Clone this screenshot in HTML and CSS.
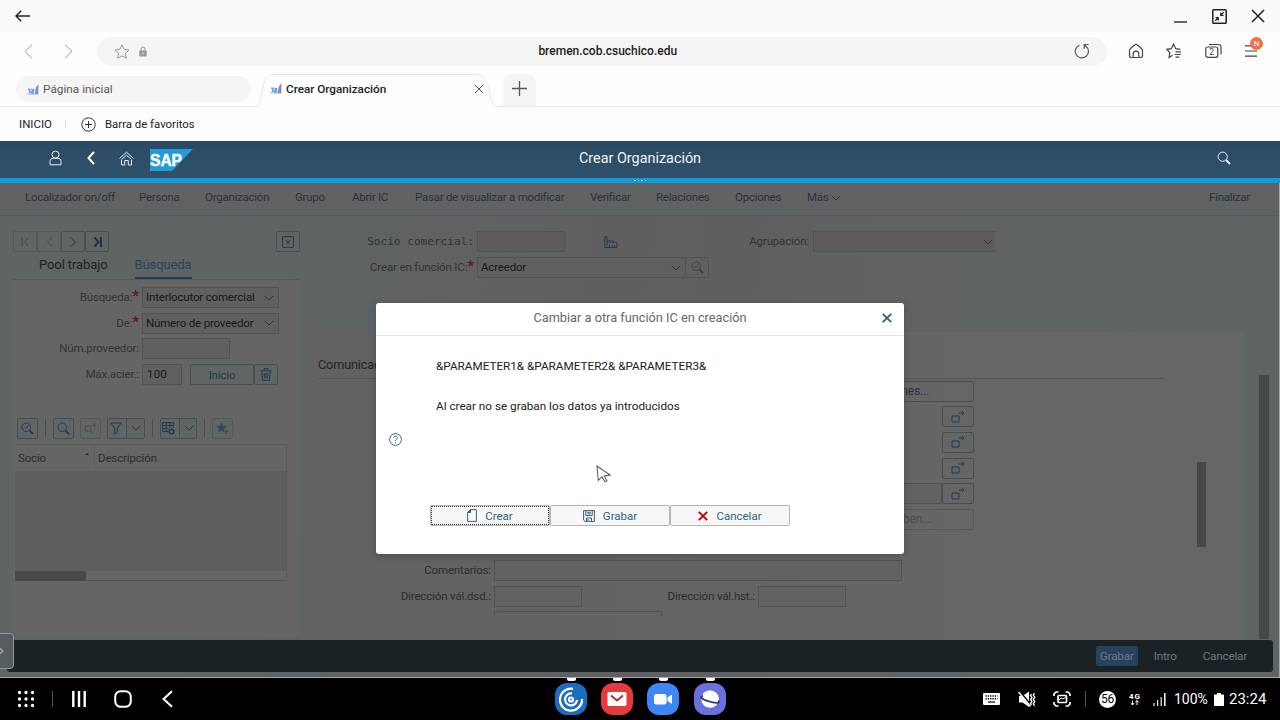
FILE: index.html
```html
<!DOCTYPE html>
<html lang="es">
<head>
<meta charset="utf-8">
<title>Crear Organización</title>
<link rel="stylesheet" href="styles.css">
</head>
<body>
<svg class="defs" width="0" height="0">
  <defs>
    <symbol id="chev" viewBox="0 0 10 6"><path d="M.7.8 5 5.1 9.3.8"/></symbol>
    <symbol id="lens" viewBox="0 0 14 14"><circle cx="5.7" cy="5.7" r="4.600"/><path d="m9 9 4 4" stroke-width="1.8"/></symbol>
    <symbol id="lens-check" viewBox="0 0 14 14"><circle cx="5.7" cy="5.7" r="4.6"/><path d="M3.7 5.6 5.2 7.1 8 4"/><path d="m9 9 4 4" stroke-width="1.8"/></symbol>
    <symbol id="open" viewBox="0 0 14 14"><path d="M1 6h7v6H1zM8 3h5M10.8.8 13 3l-2.2 2.2"/></symbol>
    <symbol id="fav" viewBox="0 0 12 11"><g stroke="none"><path d="M0 10.5 .5 9l7-2 3-6.500h1V11z" fill="#b9c8e6"/><path d="M1 4.500 7 5v4.500L2.500 9z" fill="#5b93d8"/><path d="M8.800 4 11.300.5 11 10H8z" fill="#8f86bd"/></g><path d="M2.500 6h3M4 6v2.500M6 8h2" stroke="#e8f0fb" stroke-width=".8"/></symbol>
  </defs>
</svg>

<header class="titlebar">
  <svg class="win-back" width="16" height="12" viewBox="0 0 16 12"><path d="M15 6H1M6.200.8 1 6l5.200 5.200"/></svg>
  <svg class="win-min" width="13" height="2"><rect width="13" height="2"/></svg>
  <svg class="win-restore" width="15" height="15" viewBox="0 0 15 15"><rect x=".8" y=".8" width="13.400" height="13.400" rx=".8"/><path d="M11.800 3.200 9 6M8.700 3.500v2.800h2.800M3.200 11.800 6 9M3.500 8.700h2.800v2.800" stroke-width="1.200"/></svg>
  <svg class="win-close" width="14" height="14" viewBox="0 0 14 14"><path d="m1 1 12 12M13 1 1 13"/></svg>
</header>

<div class="addressbar">
  <svg class="nav-prev" width="9" height="15" viewBox="0 0 9 15"><path d="M8 .7 1 7.500l7 6.800"/></svg>
  <svg class="nav-next" width="9" height="15" viewBox="0 0 9 15"><path d="m1 .7 7 6.800-7 6.800"/></svg>
  <div class="url">
    <svg class="star" width="16" height="15" viewBox="0 0 16 15"><path d="m8 1 2.100 4.300 4.900.7-3.500 3.400.8 4.800L8 11.900l-4.300 2.300.8-4.800L1 6l4.900-.7z"/></svg>
    <svg class="lock" width="8" height="11" viewBox="0 0 8 11"><path d="M2 5V3a2 2 0 0 1 4 0v2" fill="none" stroke="#999"/><rect x=".3" y="4.500" width="7.400" height="6" rx=".8" fill="#999"/><path d="M4 6.500v2" stroke="#ddd"/></svg>
    <span class="host">bremen.cob.csuchico.edu</span>
    <svg class="reload" width="16" height="16" viewBox="0 0 16 16"><path d="M5.500 2.200A6.600 6.600 0 1 0 12 3.200M14.500 1.500h-4.300v4.200M10.300 1.700l2 2.200"/></svg>
  </div>
  <div class="tools">
    <svg width="16" height="16" viewBox="0 0 16 16"><path d="M1.500 7.200c0-.6.300-1 .8-1.400l4.700-4c.6-.5 1.400-.5 2 0l4.700 4c.5.400.8.800.8 1.400v5.600c0 1-.7 1.700-1.700 1.700H10.800V11a2.800 2.800 0 0 0-5.600 0v3.500H3.200c-1 0-1.700-.7-1.700-1.700zM5.200 14.500h5.600"/></svg>
    <svg width="16" height="16" viewBox="0 0 16 16"><path d="M6.600 12.300 3 14.500l.9-4.700L.8 6.300l4.500-.6 2.200-4.500 2.200 4.500 4.600.6M9.500 8.800h5.500M8.500 11.500h6.200M9.500 14.200h3.800"/></svg>
    <svg width="17" height="16" viewBox="0 0 17 16"><rect x=".8" y="4" width="12" height="10.300" rx="2"/><path d="M4 1.500h9.500c1.500 0 2.500 1 2.500 2.500v7.500"/><text x="4.300" y="12">2</text></svg>
    <div class="menu-btn">
      <svg width="14" height="14" viewBox="0 0 14 14"><path d="M1 1.800h12M1 7h12M1 12.200h12"/></svg>
      <span class="badge">N</span>
    </div>
  </div>
</div>

<div class="tabs">
  <div class="tab-idle"><svg width="12" height="11"><use href="#fav"/></svg><span>Página inicial</span></div>
  <div class="tab-live">
    <svg class="tab-shape" width="242" height="35" viewBox="0 0 242 35"><path d="M0 34.500h1C7 34.500 4 2.500 16 2.500H220C237 2.500 232 34.500 240 34.500h2"/></svg>
    <svg class="favicon" width="12" height="11"><use href="#fav"/></svg><span>Crear Organización</span>
    <svg class="tab-close" width="10" height="10" viewBox="0 0 10 10"><path d="m.8.8 8.400 8.400M9.200.8.800 9.200"/></svg>
  </div>
  <div class="tab-new"><svg width="15" height="15" viewBox="0 0 15 15"><path d="M7.500 0v15M0 7.500h15"/></svg></div>
</div>

<div class="bookmarks">
  <span class="bm-home">INICIO</span><i></i>
  <svg width="15" height="15" viewBox="0 0 15 15"><circle cx="7.500" cy="7.500" r="6.700"/><path d="M7.500 4v7M4 7.500h7"/></svg>
  <span class="bm-text">Barra de favoritos</span>
</div>

<header class="shell">
  <svg class="user" width="13" height="16" viewBox="0 0 13 16"><circle cx="6.500" cy="4.600" r="3.500"/><path d="M1 14.800V11.500c0-2 1.300-3.200 3.200-3.200h4.600c1.900 0 3.200 1.200 3.200 3.200v3.300z"/></svg>
  <svg class="back" width="8" height="14" viewBox="0 0 8 14"><path d="M7 1 1.500 7 7 13"/></svg>
  <svg class="home" width="15" height="15" viewBox="0 0 15 15"><path d="M.5 7.500 7.500 1.200l7 6.300M2.500 9v5h3.200V9.500h3.600V14h3.200V9M2.500 8.500l5-4.300 5 4.300"/></svg>
  <svg class="sap" width="43" height="22" viewBox="0 0 43 22"><path d="M0 0h43L22 22H0z" fill="#1e9cdb"/><text x="0" y="17.300" textLength="32" lengthAdjust="spacingAndGlyphs">SAP</text></svg>
  <h1>Crear Organización</h1>
  <svg class="find" width="14" height="14"><use href="#lens"/></svg>
</header>
<div class="loadbar"><i></i><i></i><i></i><i></i></div>

<main class="app">
  <nav class="menu">
    <span>Localizador on/off</span><span>Persona</span><span>Organización</span><span>Grupo</span><span>Abrir IC</span><span>Pasar de visualizar a modificar</span><span>Verificar</span><span>Relaciones</span><span>Opciones</span><span>Más <svg class="chev" width="10" height="6"><use href="#chev"/></svg></span><span>Finalizar</span>
  </nav>

  <div class="work">
    <aside class="side">
      <div class="pager">
        <b class="btn off"><svg width="9" height="12" viewBox="0 0 9 12"><path d="M1 1v10M7.500 1.500 3.500 6l4 4.500"/></svg></b><b class="btn off"><svg width="7" height="12" viewBox="0 0 7 12"><path d="M6 1.500 1.500 6 6 10.500"/></svg></b><b class="btn"><svg width="7" height="12" viewBox="0 0 7 12"><path d="M1 1.500 5.500 6 1 10.500"/></svg></b><b class="btn strong"><svg width="9" height="12" viewBox="0 0 9 12"><path d="M8 1v10M1.500 1.500l4 4.500-4 4.500"/></svg></b>
        <b class="btn shut"><svg width="12" height="12" viewBox="0 0 12 12"><path d="M.6.6h10.800v10.800H.6zM4 4l4 4M8 4 4 8"/></svg></b>
      </div>
      <div class="side-tabs"><span>Pool trabajo</span><span class="on">Búsqueda</span></div>
      <section class="side-panel">
        <div class="row"><label>Búsqueda:<em>*</em></label><div class="select">Interlocutor comercial<svg class="chev" width="10" height="6"><use href="#chev"/></svg></div></div>
        <div class="row"><label>De:<em>*</em></label><div class="select">Número de proveedor<svg class="chev" width="10" height="6"><use href="#chev"/></svg></div></div>
        <div class="row"><label>Núm.proveedor:</label><div class="field w88"></div></div>
        <div class="row"><label>Máx.acier.:</label><div class="field w40">100</div><b class="btn start">Inicio</b><b class="btn"><svg width="12" height="13" viewBox="0 0 12 13"><path d="M.5 2.800h11M4 2.500V.6h4v1.900M1.800 3l.7 9.400h7L10.200 3M4.300 5v5.500M6 5v5.500M7.700 5v5.500"/></svg></b></div>

        <div class="toolbar">
          <b class="btn sq"><svg width="13" height="13"><use href="#lens-check"/></svg></b><i></i>
          <b class="btn sq"><svg width="13" height="13"><use href="#lens"/></svg></b>
          <b class="btn sq off"><svg width="13" height="13" viewBox="0 0 14 14"><circle cx="4.500" cy="7" r="3.200"/><path d="m7 9.500 3.200 3.200M11 1v5M8.500 3.500h5"/></svg></b>
          <b class="btn split"><svg width="12" height="13" viewBox="0 0 12 13"><path d="M.8 1h10.400L7.300 6v4.500L4.700 12V6z"/></svg><u></u><svg width="10" height="6"><use href="#chev"/></svg></b><i></i>
          <b class="btn split"><svg width="13" height="13" viewBox="0 0 13 13"><path d="M6.500 9.500H.6V.6h10.800v5M.6 3.500h10.800M.6 6.500h6M4.200.6v8.900M7.800.6V6"/><circle cx="9.500" cy="9.500" r="2.300" stroke-width="1.500"/></svg><u></u><svg width="10" height="6"><use href="#chev"/></svg></b><i></i>
          <b class="btn sq off"><svg width="13" height="13" viewBox="0 0 13 13"><path d="m5.500.8 1.300 3.400 3.700.2-2.900 2.300-.2.300v2.300L5.500 8.200 2.700 10l.8-3.400L.7 4.400l3.600-.2z" fill="#384650"/><path d="M10 7v5.500M7.300 9.700h5.500"/></svg></b>
        </div>

        <div class="table">
          <div class="thead"><span>Socio<s></s></span><span>Descripción</span></div>
          <div class="tbody"></div>
          <div class="hscroll"><div></div></div>
        </div>
      </section>
    </aside>

    <section class="detail">
      <div class="top-row">
        <label class="mono">Socio comercial:</label><div class="field w88"></div>
        <svg class="factory" width="14" height="12" viewBox="0 0 14 12"><path d="M.8 11.400V.8h2.200v9M3 6.500 6 4v3l3.200-2.500v2.800l1.500-1.500c1.500 0 2.300 1 2.300 2.200v3.400H.8M5.500 9v2.400M8 9v2.400M10.500 9v2.400"/></svg>
        <label class="group-label">Agrupación:</label><div class="select group"><svg class="chev" width="10" height="6"><use href="#chev"/></svg></div>
      </div>
      <div class="top-row">
        <label>Crear en función IC:<em>*</em></label><div class="select role">Acreedor<svg class="chev" width="10" height="6"><use href="#chev"/></svg></div><b class="btn dim"><svg width="13" height="13"><use href="#lens-check"/></svg></b>
      </div>
      <div class="card">
        <h2>Comunicación</h2>
        <div class="card-body">
          <div class="comm">
            <b class="btn wide">Otras comunicaciones...</b>
            <div class="line"><b class="btn go"><svg width="14" height="14"><use href="#open"/></svg></b></div>
            <div class="line"><b class="btn go"><svg width="14" height="14"><use href="#open"/></svg></b></div>
            <div class="line"><b class="btn go"><svg width="14" height="14"><use href="#open"/></svg></b></div>
            <div class="line"><div class="field fill"></div><b class="btn go"><svg width="14" height="14"><use href="#open"/></svg></b></div>
            <b class="btn wide off">Dependencias: ben...</b>
          </div>
          <div class="card-row first"><label>Comentarios:</label><div class="field w408"></div></div>
          <div class="card-row"><label>Dirección vál.dsd.:</label><div class="field w88"></div><label class="until">Dirección vál.hst.:</label><div class="field w88"></div></div>
          <div class="cut"></div>
        </div>
        <div class="inner-thumb"></div>
      </div>
    </section>
    <div class="page-thumb"></div>
  </div>

  <footer class="actions"><span class="primary">Grabar</span><span>Intro</span><span>Cancelar</span></footer>
  <div class="handle"><svg width="6" height="8" viewBox="0 0 6 8"><path d="M0 .5 4 4 0 7.500"/></svg></div>

  <div class="dialog">
    <div class="dlg-head"><span>Cambiar a otra función IC en creación</span><svg width="10" height="10" viewBox="0 0 10 10"><path d="m.8.8 8.400 8.400M9.200.8.800 9.200"/></svg></div>
    <div class="dlg-body">
      <p class="params">&amp;PARAMETER1&amp; &amp;PARAMETER2&amp; &amp;PARAMETER3&amp;</p>
      <p class="note">Al crear no se graban los datos ya introducidos</p>
      <svg class="help" width="13" height="13" viewBox="0 0 13 13"><circle cx="6.500" cy="6.500" r="5.900"/><path d="M4.700 5c0-2.400 3.700-2.400 3.700-.2 0 1.400-1.900 1.400-1.900 3M6.500 9v1.200"/></svg>
      <div class="dlg-btns">
        <b class="focus"><svg width="10" height="13" viewBox="0 0 10 13"><path d="M3.500.6h5.900v11.800H.6V3.500z"/><path d="M.6 3.500 3.500.6v2.900z" fill="#355f80"/></svg><span>Crear</span></b>
        <b><svg width="12" height="12" viewBox="0 0 12 12"><path d="M.6.6h10.800v10.800H2L.6 10zM2.800.6v5h6.400v-5M3.500 11.400V8h5v3.400M5 9v2M4.300 2.300h3.400M4.300 3.900h3.400"/></svg><span>Grabar</span></b>
        <b><svg class="red" width="10" height="10" viewBox="0 0 10 10"><path d="M.8.8 9.200 9.200M9.200.8.800 9.200"/></svg><span>Cancelar</span></b>
      </div>
    </div>
  </div>
  <svg class="cursor" width="15" height="19" viewBox="0 0 15 19"><path d="M1 1v14.500l4-3.300 2.600 5.300 2-.9-2.300-5.100 6-.3z" transform="rotate(-5 1 1)"/></svg>
</main>

<footer class="taskbar">
  <svg class="grid" width="18" height="18" viewBox="0 0 18 18"><path d="M2.500 2.500h13.100M2.500 9h13.100M2.500 15.500h13.100"/></svg>
  <i></i>
  <svg class="recents" width="14" height="16" viewBox="0 0 14 16"><path d="M1.300 0v16M7 0v16M12.700 0v16"/></svg>
  <svg class="homekey" width="18" height="18" viewBox="0 0 18 18"><rect x="1.200" y="1.200" width="15.600" height="15.600" rx="5.500"/></svg>
  <svg class="backkey" width="11" height="18" viewBox="0 0 11 18"><path d="M10 1.200 1.500 9l8.500 7.800"/></svg>
  <div class="apps">
    <div><svg width="32" height="32" viewBox="0 0 32 32"><rect width="32" height="32" rx="12" fill="#1e6cc0"/><g fill="none" stroke="#fff" stroke-width="2.200"><circle cx="16" cy="16.500" r="2"/><path d="M17 10.500a6 6 0 1 0 5 6.500M18 5.800A11 11 0 1 0 27 16"/></g></svg></div>
    <div><svg width="32" height="32" viewBox="0 0 32 32"><rect width="32" height="32" rx="12" fill="#e43b3e"/><rect x="6.500" y="9" width="19" height="14" rx="1.500" fill="#fff"/><path d="m10 12.500 6 5 6-5" fill="none" stroke="#b3262d" stroke-width="1.800"/></svg></div>
    <div><svg width="32" height="32" viewBox="0 0 32 32"><rect width="32" height="32" rx="12" fill="#3d86f5"/><rect x="7" y="11" width="12.500" height="10.500" rx="2.500" fill="#fff"/><path d="m20.500 14.500 4.500-3v9.500l-4.500-3z" fill="#fff"/></svg></div>
    <div><svg width="32" height="32" viewBox="0 0 32 32"><rect width="32" height="32" rx="12" fill="#6b70e0"/><circle cx="16" cy="16" r="8.800" fill="#fff"/><path d="M9 13c-4 .5-2 3 5 5.200 7 2.200 13 2.300 10.500-.7" fill="none" stroke="#343a87" stroke-width="1.800"/></svg></div>
  </div>
  <div class="status">
    <svg class="s-kb" width="17" height="12" viewBox="0 0 17 12"><rect width="17" height="12" rx="1.200" fill="#fff"/><path d="M2.500 3h12M2.500 5.700h12" stroke="#000" stroke-width="1.400" stroke-dasharray="1.300 1"/><path d="M5 9h7" stroke="#000" stroke-width="1.200"/></svg>
    <svg class="s-mute" width="18" height="17" viewBox="0 0 18 17"><path d="M1 5h3.500L11 .5v15.500L4.500 11.500H1z" fill="#fff"/><path d="M1.500 0 14 15" stroke="#000" stroke-width="1.500"/><path d="m.5 1 12 14.500" stroke="#fff" stroke-width="1.500"/><path d="m13.500 3-1 1.500 1.500 2-1.500 2 1.500 2-1.500 2 1 1.500M16.500 2l-1.200 2 1.500 2.200-1.500 2.200 1.500 2.200-1.500 2.200 1.200 2" fill="none" stroke="#fff" stroke-width="1.300"/></svg>
    <svg class="s-cap" width="18" height="16" viewBox="0 0 18 16"><path d="M1 5V3l2-2h2.500M12.500 1H15l2 2v2M17 11v2l-2 2h-2.500M5.500 15H3l-2-2v-2" fill="none" stroke="#fff" stroke-width="1.700"/><rect x="5" y="4.500" width="8.500" height="7" rx="1" fill="none" stroke="#fff" stroke-width="1.700"/><path d="m6 9 2-2 2 1 3-2" fill="none" stroke="#fff"/></svg>
    <i></i><span class="s-num">56</span>
    <svg class="s-4g" width="12" height="14" viewBox="0 0 12 14"><text x="0" y="6.600" textLength="11">4G</text><path d="M3.500 8.500V13M2 11.200 3.500 13 5 11.200M8 13V8.500M6.500 10.300 8 8.500l1.500 1.800" fill="none" stroke="#fff"/></svg>
    <svg class="s-sig" width="13" height="13" viewBox="0 0 13 13"><path d="M1 13v-3M4.600 13V7M8.200 13V4" stroke="#ddd" stroke-width="1.300"/><path d="M11.800 13V0" stroke="#fff" stroke-width="1.500"/></svg>
    <span class="s-pct">100%</span>
    <svg class="s-bat" width="10" height="13" viewBox="0 0 10 13"><path d="M3 0h4v1.500h2c.6 0 1 .4 1 1V12c0 .6-.4 1-1 1H1c-.6 0-1-.4-1-1V2.500c0-.6.400-1 1-1h2z" fill="#fff"/></svg>
    <span class="s-time">23:24</span>
  </div>
</footer>
</body>
</html>
```

FILE: styles.css
```css
* { box-sizing: border-box; }
body { margin: 0; width: 1280px; height: 720px; overflow: hidden; background: #fefefe; font-family: Roboto, "Noto Sans", sans-serif; font-size: 12px; color: #222; display: flex; flex-direction: column; }
svg { display: block; fill: none; stroke: currentColor; flex: none; }
svg.defs { position: absolute; }
b { font-weight: 400; }
span, label { white-space: nowrap; }

/* Browser window */
.titlebar { height: 32px; flex: none; background: #fafafa; display: flex; align-items: center; padding: 0 15px; color: #222; }
.titlebar svg { stroke-width: 1.5; }
.win-min { margin-left: auto; margin-top: 12px; margin-right: 25px; }
.titlebar .win-min { fill: #666; stroke: none; }
.win-restore { margin-right: 24px; }
.addressbar { height: 38px; flex: none; display: flex; align-items: center; padding: 0 22px 0 24px; }
.nav-prev, .nav-next { color: #999; }
.nav-next { margin-left: 31px; }
.url { margin-left: 24px; width: 1010px; height: 29px; border-radius: 15px; background: #f5f5f5; display: flex; align-items: center; padding: 0 17px; color: #777; }
.star { color: #999; }
.lock { margin-left: 9px; stroke: none; }
.host { flex: 1; text-align: center; color: #1c1c1c; font-size: 12px; font-weight: 500; margin-left: -5px; }
.reload { stroke-width: 1.200; color: #555; }
.tools { display: flex; align-items: center; margin-left: 21px; gap: 22.500px; color: #444; }
.tools svg { stroke-width: 1.200; }
.tools text { font-size: 8.500px; fill: #444; stroke: none; }
.menu-btn { position: relative; }
.badge { position: absolute; left: 6px; top: -7px; width: 13px; height: 13px; border-radius: 50%; background: #ee7044; color: #fff; font-size: 8px; line-height: 13px; text-align: center; }

.tabs { height: 37px; flex: none; display: flex; border-bottom: 1px solid #e9e9e9; padding-left: 16px; }
.tab-idle { width: 235px; height: 26px; margin-top: 6px; border-radius: 13px; background: #f5f5f5; display: flex; align-items: center; padding-left: 11px; gap: 4px; color: #555; font-size: 11.800px; }
.tab-live { position: relative; margin-left: 5px; width: 242px; height: 37px; display: flex; align-items: center; padding: 0 14px 0 14px; gap: 4px; font-weight: 500; font-size: 11.700px; background: #fefefe; }
.tab-shape { position: absolute; left: 0; top: 2px; color: #e6e6e6; }
.tab-close { margin-left: auto; color: #555; }
.tab-new { margin-left: 5px; margin-top: 4px; width: 33px; height: 32px; border-radius: 9px 9px 0 0; background: #f4f4f4; display: flex; align-items: center; justify-content: center; padding-bottom: 3px; color: #555; }
.tab-new svg { stroke-width: 1.300; }
.bookmarks { height: 34px; flex: none; display: flex; align-items: center; padding-left: 19px; }
.bookmarks i { width: 1px; height: 8px; background: #ddd; margin: 0 15px 0 13px; }
.bookmarks svg { color: #333; }
.bm-home { width: 33px; font-size: 11.500px; }
.bm-text { margin-left: 9px; font-size: 11.400px; }

/* SAP shell */
.shell { position: relative; height: 37px; flex: none; background: linear-gradient(#2b4a62, #31506b); color: #e8eff5; display: flex; align-items: center; padding: 0 0 3px 49px; }
.back { margin-left: 25px; stroke-width: 2; color: #fff; }
.home { margin-left: 24px; }
.sap { margin-left: 16px; margin-top: 3px; stroke: none; }
.sap text { font: bold 16.500px "Liberation Sans", sans-serif; fill: #fff; stroke: #fff; stroke-width: .5; }
.shell h1 { position: absolute; left: 0; right: 0; margin: 0; text-align: center; font-size: 14.400px; font-weight: 400; color: #eef3f7; }
.find { margin-left: auto; margin-right: 49px; }
.loadbar { height: 5px; flex: none; background: #0f9bdc; display: flex; justify-content: center; align-items: center; gap: 2px; }
.loadbar i { width: 1.500px; height: 1.500px; background: #aadcf3; }

/* Dimmed application */
.app { position: relative; height: 495px; flex: none; background: linear-gradient(100deg, #5f6465 0%, #5f6465 18%, #605f62 50%, #5f6465 85%); border-bottom: 1px solid #a5a8aa; border-right: 1px solid #a5a8aa; color: #2a2d2f; display: flex; flex-direction: column; letter-spacing: -.15px; }
.menu { height: 33px; flex: none; border-bottom: 1px solid #56595b; background: #5f6364; color: #263440; display: grid; grid-template-columns: 114px 66px 90px 57px 63px 175px 66px 79px 72px 1fr 46px; align-items: center; padding: 0 24px 4px 25px; font-size: 11.500px; letter-spacing: -.25px; }
.menu .chev { display: inline-block; vertical-align: 0; }
.work { display: flex; height: 424px; flex: none; }
.side { width: 300px; padding: 15px 0 0 13px; }
.pager { display: flex; height: 21px; }
.btn { border: 1px solid #484d51; border-radius: 2px; display: flex; align-items: center; justify-content: center; height: 21px; min-width: 24px; color: #26384a; background: #626566; }
.btn.off { border-color: #54585a; color: #424b52; }
.btn.strong svg { stroke-width: 2; color: #1f3341; }
.shut { margin-left: auto; }
.side-tabs { height: 28px; display: flex; padding-left: 26px; gap: 27px; font-size: 13px; line-height: 25px; letter-spacing: -.1px; border-bottom: 1px solid #54595b; color: #1e2225; }
.side-tabs .on { color: #2b4358; border-bottom: 2px solid #253d4f; height: 27px; }
.side-panel { height: 357px; background: #656565; padding-top: 7px; }
.row { display: flex; height: 25.700px; align-items: flex-start; }
.row label { width: 126px; text-align: right; line-height: 21px; font-size: 11.500px; margin-right: 3px; color: #303437; }
em { font-style: normal; font-weight: 700; color: #5e191f; font-size: 15px; line-height: 10px; }
.select, .field { border: 1px solid #515355; height: 21px; line-height: 19px; font-size: 11.500px; letter-spacing: -.17px; color: #151719; padding: 0 4px 0 3px; white-space: nowrap; background: #606060; }
.select { width: 137px; display: flex; align-items: center; justify-content: space-between; color: #151719; }
.select svg { color: #2d3236; }
.w88 { width: 88px; } .w408 { width: 408px; }
.w40 { width: 40px; font-size: 11.500px; letter-spacing: .2px; padding-left: 4px; }
.start { width: 64px; margin-left: 8px; font-size: 11.500px; }
.toolbar { display: flex; align-items: center; margin: 28px 0 0 4px; }
.toolbar .sq { width: 21px; min-width: 21px; margin-right: 6px; }
.toolbar > i { width: 1px; height: 18px; background: #4b4e50; margin: 0 7px 0 1px; }
.toolbar .split { width: 37.500px; margin-right: 6px; justify-content: space-around; }
.split u { width: 1px; height: 19px; background: #484d51; }
.table { width: 272px; margin: 5px 0 0 2px; border-top: 1px solid #5b5b5b; border-right: 1px solid #585a5b; }
.thead { height: 26px; display: grid; grid-template-columns: 80px 1fr; align-items: center; font-size: 11.500px; }
.thead span { padding-left: 3px; line-height: 26px; }
.thead span:first-child { border-right: 1px solid #5e5e5e; display: flex; }
.thead s { margin: 8px 5px 0 auto; width: 0; height: 0; border: 2.500px solid transparent; border-top: 0; border-bottom: 2.500px solid #4a1118; }
.tbody { height: 100px; background: #5e5e5e; }
.hscroll { height: 10px; border-bottom: 1px solid #555; }
.hscroll div { width: 71px; height: 10px; background: #494949; }

.detail { width: 937px; margin-left: 7px; padding-top: 15px; display: flex; flex-direction: column; }
.top-row { display: flex; height: 26px; align-items: flex-start; flex: none; }
.top-row > label { width: 167px; text-align: right; margin-right: 3px; line-height: 21px; color: #303437; font-size: 11.500px; }
.top-row .mono { font-family: "DejaVu Sans Mono", "Liberation Mono", monospace; font-size: 11.100px; letter-spacing: 0; }
.top-row .field, .top-row .select { background: #5d5b5e; }
.factory { margin: 5px 0 0 39px; color: #253849; }
.top-row .group-label { width: 191px; margin-right: 4px; }
.top-row .group { width: 182px; justify-content: flex-end; padding-right: 2px; border-right: 0; }
.top-row .role { width: 209px; background: #5f6061; }
.top-row .dim { border-color: #515456; border-left: 0; color: #3b4145; background: none; width: 23px; min-width: 23px; height: 21px; }
.card { margin-top: 49px; height: 308px; background: linear-gradient(90deg, #626163, #666 75%); padding: 20px 80px 0 11px; position: relative; flex: none; }
.card h2 { margin: 0; font-size: 12.700px; line-height: 25px; font-weight: 400; height: 27px; border-bottom: 1px solid #53565a; color: #222527; }
.comm { width: 656px; padding-top: 1.500px; display: flex; flex-direction: column; gap: 4.700px; align-items: flex-end; }
.card .btn { background: none; }
.comm .wide { width: 220px; padding-right: 44px; justify-content: flex-end; color: #25333f; font-size: 12px; }
.comm .wide.off { padding-right: 42px; color: #414d55; }
.line { display: flex; justify-content: flex-end; }
.go { width: 32px; }
.fill { width: 200px; }
.card .field { background: #626263; }
.card-row { display: flex; height: 25.700px; }
.card-row.first { margin-top: 30px; }
.card-row label { width: 173px; text-align: right; margin-right: 3px; line-height: 21px; font-size: 11.500px; }
.cut { width: 168px; height: 5px; margin-left: 176px; border: 1px solid #505550; border-bottom: 0; }
.inner-thumb { position: absolute; right: 38px; top: 130px; width: 9px; height: 85px; background: #484848; }
.page-thumb { width: 10px; height: 264px; margin: 159px 0 0 15px; background: #474949; }
.actions { height: 32px; flex: none; margin: 0 6px 0 7px; border-radius: 3px; background: #1b2225; display: flex; align-items: center; justify-content: flex-end; padding-right: 26px; gap: 26px; color: #6d777c; font-size: 11.800px; letter-spacing: -.25px; }
.primary { background: #25435e; text-align: center; line-height: 20px; border-radius: 2px; margin-right: -10px; width: 42px; }
.handle { position: absolute; left: -2px; top: 450px; width: 16px; height: 36px; border: 1.500px solid #929798; border-radius: 0 4px 4px 0; background: #565c5f; color: #aaa; display: flex; align-items: center; }
.handle svg { stroke-width: 1.300; }

/* Dialog over the application */
.dialog { position: absolute; left: 376px; top: 120px; width: 528px; height: 250.500px; background: #fff; border-radius: 3px; box-shadow: 0 2px 9px rgba(0,0,0,.2); letter-spacing: 0; }
.dlg-head { position: relative; height: 33px; border-bottom: 1px solid #e4e4e4; display: flex; justify-content: center; align-items: center; color: #666; font-size: 12.750px; padding-bottom: 3px; }
.dlg-head svg { position: absolute; right: 12px; top: 10px; color: #355f80; stroke-width: 1.900; }
.dlg-body p { margin: 0 0 0 60px; line-height: 20px; color: #202020; font-size: 11.720px; }
.dlg-body .params { margin-top: 19.500px; }
.dlg-body .note { margin-top: 20px; }
.help { margin: 17px 0 0 13px; color: #426986; }
.dlg-btns { margin: 59.500px 0 0 54px; display: flex; }
.dlg-btns b { width: 120px; height: 21px; border: 1px solid #b5b5b5; border-radius: 2px; background: #f7f7f7; display: flex; align-items: center; justify-content: center; gap: 8px; color: #355f80; font-size: 11.500px; }
.dlg-btns .focus { position: relative; }
.dlg-btns .focus::after { content: ""; position: absolute; inset: 0; border: 1px dotted #333; }
.dlg-btns .red { color: #b00; stroke-width: 1.900; }
.cursor { position: absolute; left: 596px; top: 282px; fill: #fff; color: #555; }

/* Android taskbar */
.taskbar { position: relative; height: 42px; flex: none; background: #000; color: #fff; display: flex; align-items: center; padding-left: 16.500px; }
.grid { stroke-width: 3.300; stroke-linecap: round; stroke-dasharray: 0 6.500; }
.taskbar i { width: 1px; height: 16px; background: #555; }
.grid + i { margin-left: 17px; }
.recents { margin-left: 19px; stroke-width: 2.400; }
.homekey { margin-left: 28px; stroke-width: 2; }
.backkey { margin-left: 30px; stroke-width: 2.200; }
.apps { margin-left: 382px; display: flex; gap: 14.400px; height: 42px; }
.apps div { padding-top: 5px; position: relative; width: 32px; }
.apps div::before { content: ""; position: absolute; top: 0; left: 12px; width: 9px; height: 3px; background: #fff; border-radius: 0 0 2px 2px; }
.apps svg, .status svg { stroke: none; }
.status { margin-left: auto; display: flex; align-items: center; padding-right: 12px; }
.s-mute { margin-left: 18px; } .s-cap { margin-left: 17px; }
.status i { margin: 0 13px 0 14px; }
.s-num { width: 17px; height: 17px; border-radius: 50%; background: #fff; color: #000; font-size: 12px; line-height: 17px; text-align: center; letter-spacing: -.3px; }
.s-4g { margin-left: 13px; } .s-4g text { fill: #fff; font-size: 8px; font-weight: 700; }
.s-sig { margin-left: 12px; }
.s-pct { margin-left: 8px; font-size: 14px; width: 34px; }
.s-bat { margin-left: 6px; }
.s-time { margin-left: 5px; font-size: 15px; width: 39px; }
```
